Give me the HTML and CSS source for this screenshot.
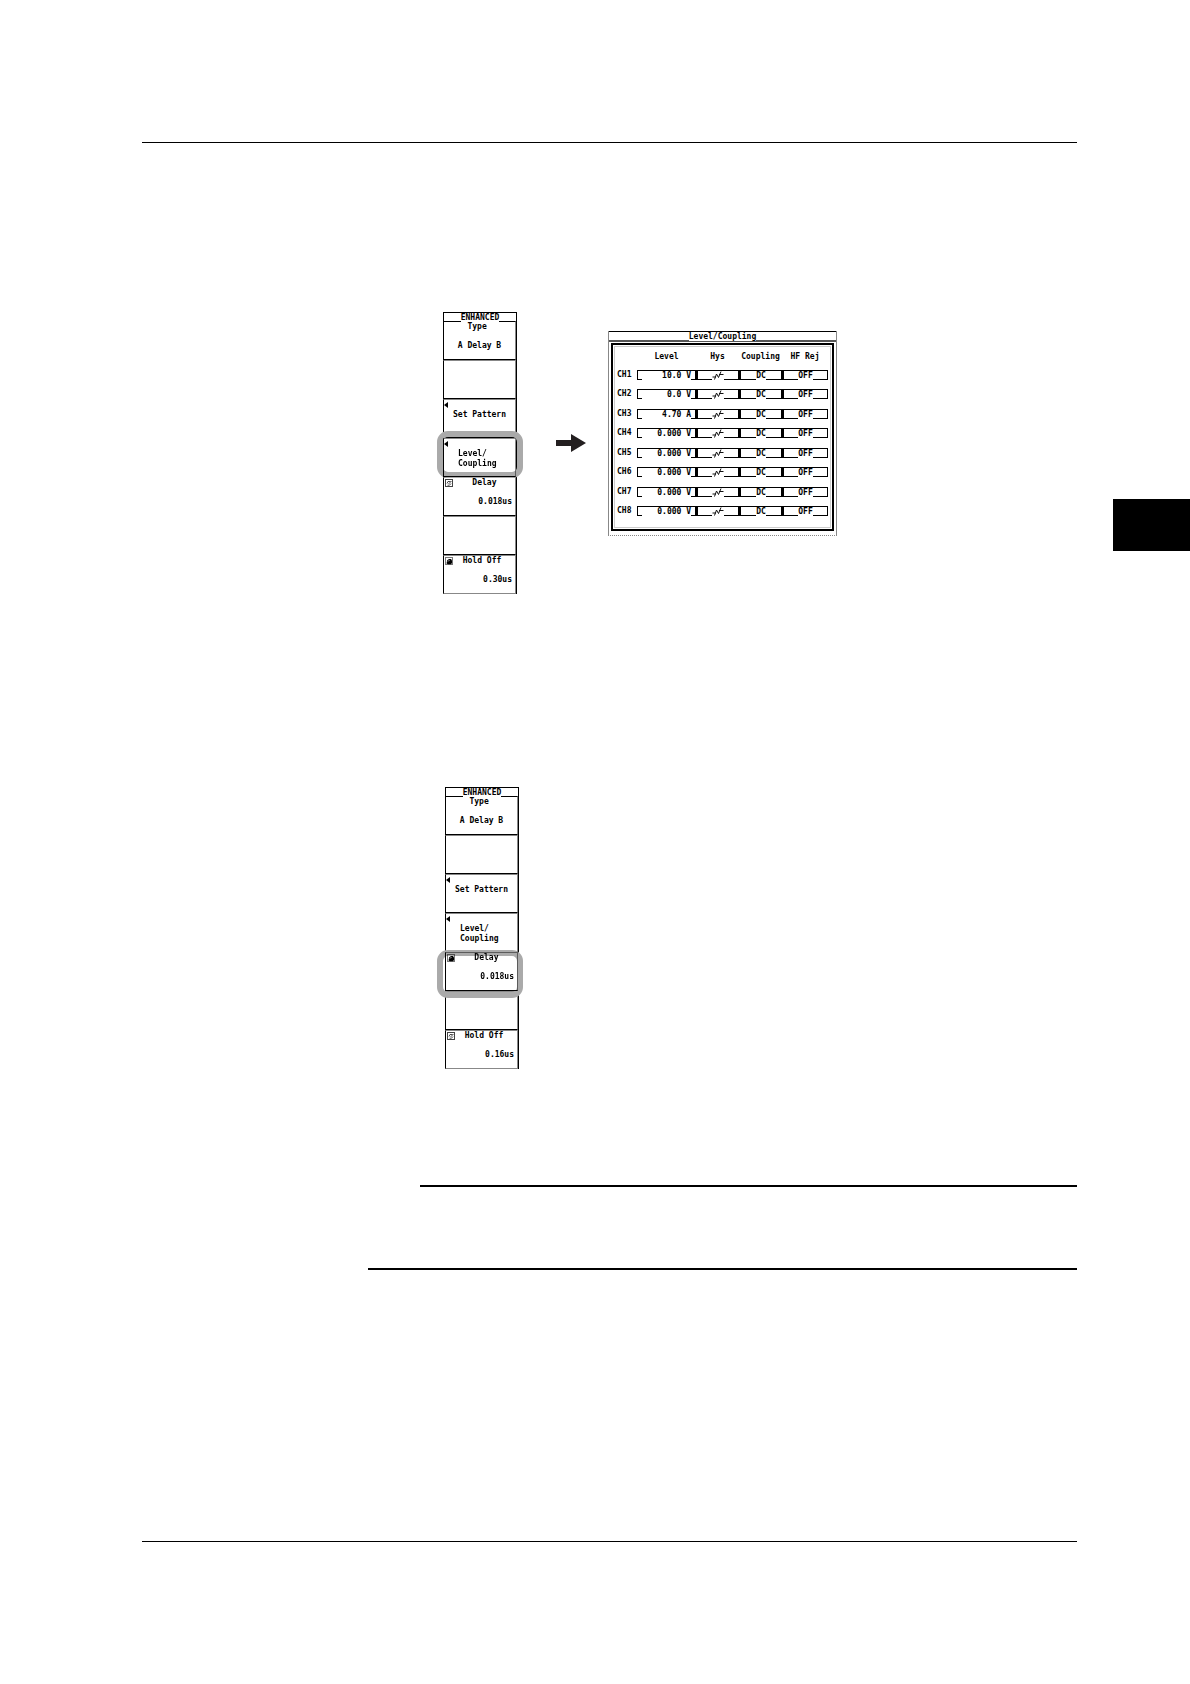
FILE: index.html
```
<!DOCTYPE html>
<html lang="en">
    <head>
        <meta charset="utf-8">
        <title>Level/Coupling</title>
        <link rel="stylesheet" href="styles.css">
    </head>
    <body>
        <svg class="defs" aria-hidden="true">
            <symbol id="knob" viewBox="0 0 8 8">
                <rect x="0.5" y="0.5" width="7" height="7" fill="#fff" stroke="#444"/>
                <path d="M2 4.5L3 2.5H5.5M2.5 6.2H4.5L6 4.5M3.5 5L6.5 2" fill="none" stroke="#222" stroke-width="0.8"/>
            </symbol>
            <symbol id="knob-on" viewBox="0 0 8 8">
                <rect x="0.5" y="0.5" width="7" height="7" fill="#fff" stroke="#777"/>
                <path d="M1.5 6.5L2.2 3.2L4 2H6L7 3.5V6L6 7.2H3Z" fill="#000"/>
                <path d="M3 4.5L4.5 3" stroke="#fff" stroke-width="0.7"/>
            </symbol>
            <symbol id="hys" viewBox="0 0 12 9">
                <path d="M2.5 8.5L4.5 3L6.5 6.5L9 0.5M0.5 6H4M7 3.5H11.5" fill="none" stroke="#111" stroke-width="1"/>
            </symbol>
        </svg>
        <div class="page">
            <main class="content">
                <header class="page-top"></header>

                <section class="figure first">
                    <div class="menu">
                        <div class="menu-title"><span>ENHANCED</span></div>
                        <button class="key"><span>Type&nbsp;</span><span>A Delay B</span></button>
                        <button class="key" aria-label="Empty"></button>
                        <button class="key sub"><span>Set Pattern</span></button>
                        <button class="key sub left marked mark-up"><span>Level/<br>Coupling</span></button>
                        <button class="key dial"><svg class="knob"><use href="#knob"/></svg><span>&nbsp;Delay</span><span class="value">0.018us</span></button>
                        <button class="key" aria-label="Empty"></button>
                        <button class="key dial"><svg class="knob"><use href="#knob-on"/></svg><span>Hold Off</span><span class="value">0.30us</span></button>
                    </div>

                    <svg class="arrow" viewBox="0 0 30 18" aria-hidden="true">
                        <path d="M0 6H15V0L30 9L15 18V12H0Z" fill="#231f20"/>
                    </svg>

                    <div class="dialog">
                        <div class="dialog-title"><span>Level/Coupling</span></div>
                        <div class="dialog-body">
                            <table class="channels">
                                <thead>
                                    <tr><th class="ch"></th><th class="level">Level</th><th class="hys">Hys</th><th class="coup">Coupling</th><th class="rej">HF Rej</th></tr>
                                </thead>
                                <tbody>
                                    <tr><th>CH1</th><td><button class="cell wide"><span>10.0 V</span></button></td><td><button class="cell" aria-label="Hysteresis"><svg><use href="#hys"/></svg></button></td><td><button class="cell"><span>DC</span></button></td><td><button class="cell"><span>OFF</span></button></td></tr>
                                    <tr><th>CH2</th><td><button class="cell wide"><span>0.0 V</span></button></td><td><button class="cell" aria-label="Hysteresis"><svg><use href="#hys"/></svg></button></td><td><button class="cell"><span>DC</span></button></td><td><button class="cell"><span>OFF</span></button></td></tr>
                                    <tr><th>CH3</th><td><button class="cell wide"><span>4.70 A</span></button></td><td><button class="cell" aria-label="Hysteresis"><svg><use href="#hys"/></svg></button></td><td><button class="cell"><span>DC</span></button></td><td><button class="cell"><span>OFF</span></button></td></tr>
                                    <tr><th>CH4</th><td><button class="cell wide"><span>0.000 V</span></button></td><td><button class="cell" aria-label="Hysteresis"><svg><use href="#hys"/></svg></button></td><td><button class="cell"><span>DC</span></button></td><td><button class="cell"><span>OFF</span></button></td></tr>
                                    <tr><th>CH5</th><td><button class="cell wide"><span>0.000 V</span></button></td><td><button class="cell" aria-label="Hysteresis"><svg><use href="#hys"/></svg></button></td><td><button class="cell"><span>DC</span></button></td><td><button class="cell"><span>OFF</span></button></td></tr>
                                    <tr><th>CH6</th><td><button class="cell wide"><span>0.000 V</span></button></td><td><button class="cell" aria-label="Hysteresis"><svg><use href="#hys"/></svg></button></td><td><button class="cell"><span>DC</span></button></td><td><button class="cell"><span>OFF</span></button></td></tr>
                                    <tr><th>CH7</th><td><button class="cell wide"><span>0.000 V</span></button></td><td><button class="cell" aria-label="Hysteresis"><svg><use href="#hys"/></svg></button></td><td><button class="cell"><span>DC</span></button></td><td><button class="cell"><span>OFF</span></button></td></tr>
                                    <tr><th>CH8</th><td><button class="cell wide"><span>0.000 V</span></button></td><td><button class="cell" aria-label="Hysteresis"><svg><use href="#hys"/></svg></button></td><td><button class="cell"><span>DC</span></button></td><td><button class="cell"><span>OFF</span></button></td></tr>
                                </tbody>
                            </table>
                        </div>
                    </div>
                </section>

                <section class="figure second">
                    <div class="menu">
                        <div class="menu-title"><span>ENHANCED</span></div>
                        <button class="key"><span>Type&nbsp;</span><span>A Delay B</span></button>
                        <button class="key" aria-label="Empty"></button>
                        <button class="key sub"><span>Set Pattern</span></button>
                        <button class="key sub left"><span>Level/<br>Coupling</span></button>
                        <button class="key dial marked mark-down"><svg class="knob"><use href="#knob-on"/></svg><span>&nbsp;Delay</span><span class="value">0.018us</span></button>
                        <button class="key" aria-label="Empty"></button>
                        <button class="key dial"><svg class="knob"><use href="#knob"/></svg><span>Hold Off</span><span class="value">0.16us</span></button>
                    </div>
                </section>

                <section class="note"></section>
                <footer class="page-bottom"></footer>
            </main>
            <aside class="tab"></aside>
        </div>
    </body>
</html>
```
FILE: styles.css
```
* {
    box-sizing: border-box;
}
body {
    margin: 0;
    background-color: white;
    color: black;
    font: bold 8px/10px "DejaVu Sans Mono", "Liberation Mono", monospace;
}
button {
    font: inherit;
    color: inherit;
    background-color: white;
    border-radius: 0;
    padding: 0;
    cursor: pointer;
}
.defs {
    display: none;
}
.page {
    display: grid;
    grid-template-columns: 1fr 77px;
    column-gap: 36px;
    min-height: 100vh;
    padding-left: 142px;
}
.content {
    display: flex;
    flex-direction: column;
}
.page-top {
    height: 143px;
    border-bottom: 1px solid black;
}
.page-bottom {
    height: 143px;
    margin-top: auto;
    border-top: 1px solid black;
}
.tab {
    height: 52px;
    margin-top: 499px;
    background-color: black;
}
.figure {
    display: flex;
    align-items: flex-start;
}
.first {
    margin: 169px 0 0 301px;
}
.second {
    margin: 193px 0 0 303px;
}

/* soft key menu */
.menu {
    width: 74px;
    border-right: 1px solid black;
}
.menu-title {
    height: 10px;
    margin-bottom: -1px;
    border: 1px solid black;
    border-right: none;
    text-align: center;
}
.menu-title span,
.dialog-title span {
    display: block;
    position: relative;
    z-index: 1;
    width: fit-content;
    height: 9px;
    margin: 0 auto;
    background-color: white;
    line-height: 10px;
}
.key {
    display: flex;
    flex-direction: column;
    justify-content: flex-start;
    position: relative;
    width: 100%;
    height: 39px;
    border: 1px solid black;
    border-right-color: #888;
    border-top-color: #888;
    text-align: center;
}
.menu-title + .key {
    border-top-color: black;
}
.key:last-child {
    border-bottom-color: #888;
}
.key span {
    width: 100%;
    height: 19px;
}
.key.sub {
    padding-top: 10px;
}
.sub::before {
    content: "";
    position: absolute;
    left: 0;
    top: 2px;
    border: 3px solid transparent;
    border-left: none;
    border-right: 4px solid black;
}
.key.left {
    padding-left: 14px;
    text-align: left;
}
.key.dial {
    padding: 0 3px 0 8px;
}
.key .value {
    text-align: right;
}
.knob {
    position: absolute;
    left: 1px;
    top: 1px;
    width: 8px;
    height: 8px;
}
.marked {
    z-index: 1;
}
.marked::after {
    content: "";
    position: absolute;
    border: 6px solid #aaa;
    border-radius: 11px;
    mix-blend-mode: multiply;
}
.mark-up::after {
    inset: -8px -8px -2px -7px;
}
.mark-down::after {
    inset: -3px -6px -8px -9px;
}

.arrow {
    width: 30px;
    height: 18px;
    margin: 122px 22px 0 39px;
}

/* level and coupling window */
.dialog {
    width: 229px;
    margin-top: 19px;
    border: 1px solid #888;
    border-bottom: 1px dotted #888;
    border-top: none;
}
.dialog-title {
    height: 11px;
    border-top: 1px solid black;
    border-bottom: 2px solid #555;
}
.dialog-body {
    margin: 1px 2px 4px;
    padding: 7px 4px 8px;
    border: 2px solid black;
    outline: 1px solid #ccc;
    outline-offset: -4px;
}
.channels {
    width: 100%;
    height: 169px;
    table-layout: fixed;
    border-collapse: collapse;
}
.channels th {
    padding: 0;
    font-weight: inherit;
    text-align: center;
}
.channels tbody th {
    text-align: left;
}
.channels thead th {
    height: 13px;
    vertical-align: top;
}
.channels td {
    padding: 0;
}
.ch {
    width: 20px;
}
.level {
    width: 59px;
}
.hys,
.coup {
    width: 43px;
}
.cell {
    display: flex;
    justify-content: center;
    width: 100%;
    height: 10px;
    border: 1px solid black;
    border-left-width: 2px;
    line-height: 9px;
}
.cell span,
.cell svg {
    flex: none;
    height: 9px;
    margin-bottom: -1px;
    background-color: white;
}
.cell svg {
    width: 12px;
}
.cell.wide {
    border-left-width: 1px;
    padding: 0 4px;
}
.wide span {
    width: 100%;
    text-align: right;
}

.note {
    height: 85px;
    margin: 116px 0 0 226px;
    border-bottom: 2px solid black;
}
.note::before {
    content: "";
    display: block;
    height: 2px;
    margin-left: 52px;
    background-color: black;
}
```
